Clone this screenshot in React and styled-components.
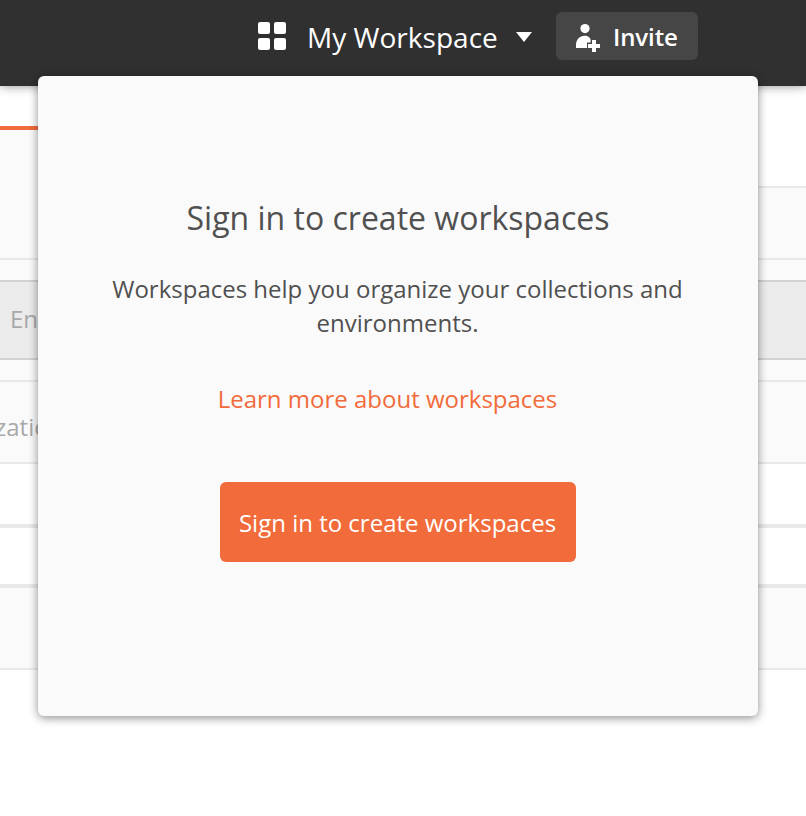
import React from "react";
import styled, { createGlobalStyle } from "styled-components";

const GlobalStyle = createGlobalStyle`
  *, *::before, *::after { box-sizing: border-box; }
  body {
    margin: 0;
    background: #fff;
    font-family: "Open Sans", "Noto Sans", sans-serif;
    overflow: hidden;
  }
`;

const Page = styled.div`
  position: relative;
  width: 806px;
  height: 816px;
  overflow: hidden;
  background: #fff;
`;

const Header = styled.header`
  position: relative;
  display: flex;
  align-items: flex-start;
  height: 86px;
  padding: 12px 0 0 258px;
  background: #303030;
  box-shadow: 0 0 10px rgba(0, 0, 0, 0.45);
`;

const WorkspaceSwitcher = styled.div`
  display: flex;
  align-items: center;
  width: 298px;
  height: 48px;
  color: #fff;
`;

const GridIcon = styled.svg`
  display: block;
  flex: none;
  margin-right: 21px;
`;

const WorkspaceName = styled.span`
  width: 209px;
  font-size: 28px;
  line-height: 38px;
  padding-top: 1px;
  letter-spacing: 0.03px;
  white-space: nowrap;
`;

const Caret = styled.svg`
  display: block;
  flex: none;
  margin-top: 2px;
`;

const InviteButton = styled.button`
  display: flex;
  align-items: center;
  width: 142px;
  height: 48px;
  padding: 2px 0 0 20px;
  border: 0;
  border-radius: 6px;
  background: #464646;
  color: #fff;
  font: 600 24px/32px "Open Sans", "Noto Sans", sans-serif;
  letter-spacing: -0.1px;
`;

const InviteIcon = styled.svg`
  display: block;
  flex: none;
  margin: 2px 13px 0 0;
`;

const TabArea = styled.div`
  display: grid;
  grid-template-columns: 50% 50%;
  height: 174px;
  border-bottom: 2px solid #e9e9e9;
`;

const ActiveTab = styled.div`
  margin-top: 40px;
  border-top: 4px solid #f26b3a;
  background: #fafafa;
`;

const TabContent = styled.div`
  margin-top: 100px;
  border-top: 2px solid #e9e9e9;
  background: #fafafa;
`;

const RequestBar = styled.div`
  height: 120px;
  padding: 20px 0;
  background: #fafafa;
`;

const UrlField = styled.div`
  display: flex;
  align-items: center;
  height: 80px;
  padding: 0 0 4px 10px;
  border: solid #d2d2d2;
  border-width: 2px 0;
  background: #ebebeb;
  color: #a9a9a9;
  font-size: 24px;
`;

const Row = styled.div`
  display: flex;
  align-items: center;
  height: ${(p) => p.$height}px;
  border-top: ${(p) => p.$line}px solid #e9e9e9;
  background: ${(p) => (p.$filled ? "#fafafa" : "#fff")};
  color: #a9a9a9;
  font-size: 24px;
`;

const ClippedLabel = styled.span`
  margin-left: -5px;
  padding-top: 8px;
`;

const Popover = styled.section`
  position: absolute;
  left: 38px;
  top: 76px;
  display: flex;
  flex-direction: column;
  align-items: center;
  width: 720px;
  height: 640px;
  padding-top: 120px;
  border-radius: 6px;
  background: #fafafa;
  box-shadow: 0 2px 10px rgba(0, 0, 0, 0.45);
  color: #505050;
  text-align: center;
`;

const Title = styled.h1`
  margin: 0 0 32px;
  font-size: 32px;
  font-weight: 400;
  line-height: 44px;
`;

const Description = styled.p`
  width: 640px;
  margin: 0 1px 42px 0;
  font-size: 24px;
  line-height: 34px;
`;

const LearnLink = styled.a`
  margin: 0 21px 66px 0;
  color: #f26b3a;
  font-size: 24px;
  line-height: 34px;
`;

const SignInButton = styled.button`
  width: 356px;
  height: 80px;
  padding: 2px 1px 0 0;
  border: 0;
  border-radius: 6px;
  background: #f26b3a;
  color: #fff;
  font: 400 24px/34px "Open Sans", "Noto Sans", sans-serif;
  white-space: nowrap;
`;

export default function App() {
  return (
    <Page>
      <GlobalStyle />
      <Header>
        <WorkspaceSwitcher>
          <GridIcon width="28" height="28" viewBox="0 0 28 28" fill="#fff">
            <rect width="12" height="12" rx="2" />
            <rect x="16" width="12" height="12" rx="2" />
            <rect y="16" width="12" height="12" rx="2" />
            <rect x="16" y="16" width="12" height="12" rx="2" />
          </GridIcon>
          <WorkspaceName>My Workspace</WorkspaceName>
          <Caret width="16" height="10" viewBox="0 0 16 10" fill="#fff">
            <path d="M0 0h16L8 10z" />
          </Caret>
        </WorkspaceSwitcher>
        <InviteButton>
          <InviteIcon width="24" height="28" viewBox="0 0 24 28" fill="#fff">
            <circle cx="9" cy="4.6" r="4.6" />
            <path d="M0 24v-3c0-5.4 3.8-9.2 8.6-9.2 3.4 0 5.8 1.8 6 4V18.4h-3.6V24z" />
            <path d="M16 16h4v4h4v4h-4v4h-4v-4h-4v-4h4z" />
          </InviteIcon>
          Invite
        </InviteButton>
      </Header>
      <TabArea>
        <ActiveTab />
        <TabContent />
      </TabArea>
      <RequestBar>
        <UrlField>En</UrlField>
      </RequestBar>
      <Row $height={82} $line={2} $filled>
        <ClippedLabel>zatio</ClippedLabel>
      </Row>
      <Row $height={62} $line={2} />
      <Row $height={60} $line={4} />
      <Row $height={84} $line={4} $filled />
      <Row $height={148} $line={2} />
      <Popover>
        <Title>Sign in to create workspaces</Title>
        <Description>
          Workspaces help you organize your collections and environments.
        </Description>
        <LearnLink>Learn more about workspaces</LearnLink>
        <SignInButton>Sign in to create workspaces</SignInButton>
      </Popover>
    </Page>
  );
}
